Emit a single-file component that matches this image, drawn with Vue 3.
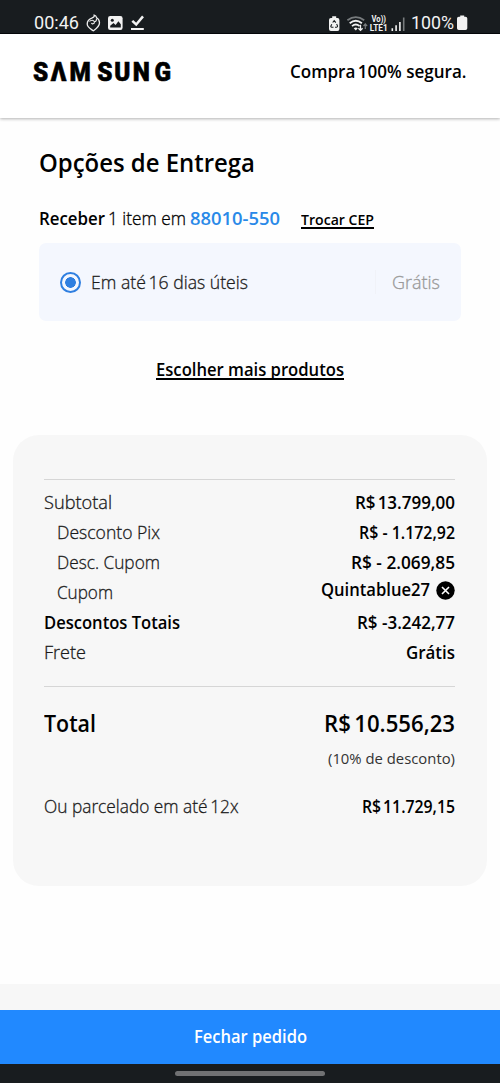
<script setup>
// Condenses a label horizontally so that it fills the given width in pixels.
const vFit = {
  mounted(el, { value }) {
    const natural = el.getBoundingClientRect().width
    el.style.transform = `scaleX(${value / natural})`
    el.style.marginRight = value - natural + 'px'
  },
}

const rows = [
  { label: 'Subtotal', lw: 68, value: 'R$ 13.799,00', vw: 100, tight: true },
  { label: 'Desconto Pix', lw: 103, value: 'R$ - 1.172,92', vw: 96, indent: true },
  { label: 'Desc. Cupom', lw: 103, value: 'R$ - 2.069,85', vw: 104, indent: true },
  { label: 'Cupom', lw: 56, value: 'Quintablue27', vw: 109, indent: true, coupon: true },
  { label: 'Descontos Totais', lw: 136, value: 'R$ -3.242,77', vw: 98, strong: true },
  { label: 'Frete', lw: 42, value: 'Grátis', vw: 49 },
]
</script>

<template>
  <div class="screen">
    <div class="status">
      <span v-fit="45" class="fit clock">00:46</span>
      <svg class="s-left" width="60" height="20" viewBox="0 0 60 20" fill="none">
        <path d="M8.2 3.2C8.6 4.4 7.6 5.2 6.2 5.8C3 7 1.2 9.3 1.2 12C1.2 15.5 5 17 7.3 18.8C10.5 16.5 13.6 14.5 13.5 10.8C13.4 8.4 12.3 6.7 10.6 5.7C10.2 4.2 9.4 3.4 8.2 3.2Z" stroke="#eee" stroke-width="1.3" />
        <path d="M3.5 9.5C5 7.6 8 7.8 8.4 10C8.7 12 5.7 12.6 5.6 10.9M8.4 9.8C9.8 9.7 10.7 8.5 10.4 6.6" stroke="#eee" stroke-width="1.1" />
        <rect x="22" y="4" width="14.6" height="14" rx="2.2" fill="#f2f2f2" />
        <circle cx="26.3" cy="8.2" r="1.5" fill="#181c1f" />
        <path d="M24.2 15.5V13.8L27.5 11L29.6 13L32.4 9.3L34.8 12.2V15.5Z" fill="#181c1f" />
        <path d="M46.3 8.8L50.2 12.5L57 4.4" stroke="#f2f2f2" stroke-width="2.5" />
        <path d="M45 17H57.8" stroke="#f2f2f2" stroke-width="2" />
      </svg>
      <svg class="s-right" width="82" height="20" viewBox="0 0 82 20" fill="none">
        <path d="M3.2 3V1.3H7.2V3H8.5Q10.4 3 10.4 4.9V14.1Q10.4 16 8.5 16H1.9Q0 16 0 14.1V4.9Q0 3 1.9 3Z" fill="#f2f2f2" />
        <path d="M3.7 7.5L5.2 5.6L6.8 7.7M7.6 9L8.5 10.8Q8.7 12 7.4 12.2H6M4.5 12.2H2.8Q1.4 12 2 10.7L2.8 9.2" stroke="#181c1f" stroke-width="1.1" />
        <path d="M18.4 5.3Q26.8-1.2 35.2 5.3" stroke="#777b7d" stroke-width="1.8" />
        <path d="M20.7 8.2Q26.8 3.4 32.9 8.2M23 11.1Q26.8 8 30.6 11.1" stroke="#f2f2f2" stroke-width="1.8" />
        <path d="M24.7 13.2Q26.8 11.8 28.8 13.2L26.8 15.5Z" fill="#f2f2f2" />
        <path d="M31.5 9.8V15.2M29.4 13.3L31.5 15.4L33.6 13.3" stroke="#f2f2f2" stroke-width="1.3" />
        <path d="M36.3 14V9.2M34.5 11L36.3 9L38.1 11" stroke="#777b7d" stroke-width="1.2" />
        <text x="42.5" y="7.4" class="lte" textLength="14.5" lengthAdjust="spacingAndGlyphs">Vo))</text>
        <text x="40.7" y="15.8" class="lte" textLength="18" lengthAdjust="spacingAndGlyphs">LTE1</text>
        <path d="M63.3 16V13.2M67.1 16V10.2M70.9 16V7" stroke="#f2f2f2" stroke-width="1.6" />
        <path d="M74.7 16V2.5" stroke="#777b7d" stroke-width="1.6" />
      </svg>
      <span v-fit="43" class="fit pct">100%</span>
      <svg class="batt" width="11" height="16" viewBox="0 0 11 16">
        <path d="M3.2 1.8V.4H7.2V1.8H8.5Q10.3 1.8 10.3 3.6V13.2Q10.3 15 8.5 15H1.8Q0 15 0 13.2V3.6Q0 1.8 1.8 1.8Z" fill="#f2f2f2" />
      </svg>
    </div>

    <header class="header">
      <svg class="logo" width="148" height="34" viewBox="0 0 148 34" role="img" aria-label="SAMSUNG">
        <text y="20.5" x="1.1 20.1 40 69.7 87.9 107.9 131" transform="scale(0.935 1)">SΛMSUNG</text>
      </svg>
      <span v-fit="176.5" class="fit secure">Compra <span class="near">100%</span> segura.</span>
    </header>

    <main class="main">
      <h1 class="title"><span v-fit="216" class="fit">Opções de Entrega</span></h1>
      <div class="receive">
        <span v-fit="66" class="fit semi">Receber</span>
        <span v-fit="78" class="fit item">1 item em</span>
        <span v-fit="90" class="fit zip">88010-550</span>
        <a class="change"><span v-fit="73" class="fit link">Trocar CEP</span></a>
      </div>
      <div class="option">
        <span class="radio"></span>
        <span v-fit="157" class="fit eta">Em até <span class="near">16</span> dias úteis</span>
        <span class="price"><span v-fit="48" class="fit">Grátis</span></span>
      </div>
      <a class="more"><span v-fit="188" class="fit link">Escolher mais produtos</span></a>
    </main>

    <section class="summary">
      <div class="rows">
        <div v-for="row in rows" :key="row.label" class="row" :class="{ strong: row.strong, indent: row.indent, coupon: row.coupon }">
          <span v-fit="row.lw" class="fit label">{{ row.label }}</span>
          <span class="value">
            <span v-fit="row.vw" class="fit" :class="{ tight: row.tight }">{{ row.value }}</span>
            <svg v-if="row.coupon" class="remove" width="19" height="19" viewBox="0 0 19 19">
              <circle cx="9.5" cy="9.5" r="9.2" fill="#000" />
              <path d="M6 6L13 13M13 6L6 13" stroke="#fff" stroke-width="1.6" />
            </svg>
          </span>
        </div>
      </div>
      <div class="total">
        <span v-fit="52" class="fit">Total</span>
        <span v-fit="131" class="fit tight">R$ 10.556,23</span>
      </div>
      <div class="note"><span v-fit="127" class="fit">(10% de desconto)</span></div>
      <div class="row">
        <span v-fit="194.5" class="fit label">Ou parcelado em até <span class="near">12x</span></span>
        <span class="value"><span v-fit="93" class="fit tight">R$ 11.729,15</span></span>
      </div>
    </section>

    <footer class="footer">
      <button class="checkout"><span v-fit="113" class="fit">Fechar pedido</span></button>
      <div class="nav"><i></i></div>
    </footer>
  </div>
</template>

<style>
body {
  background: #fff;
}
</style>

<style scoped>
.screen {
  width: 500px;
  height: 1083px;
  display: flex;
  flex-direction: column;
  overflow: hidden;
  background: #fefefe;
  color: #000;
  font-family: "Open Sans", "Noto Sans", sans-serif;
  font-size: 18px;
  white-space: nowrap;
}
.fit {
  display: inline-block;
  flex: none;
  transform-origin: 0 50%;
}
.near {
  margin-left: -2px;
}
.tight {
  word-spacing: -2.5px;
}
.link {
  text-decoration: underline;
  text-decoration-thickness: 1.5px;
  text-underline-offset: 2px;
  text-decoration-skip-ink: none;
}
.status {
  height: 34px;
  flex: none;
  box-sizing: border-box;
  padding: 12px 32.5px 0 34px;
  display: flex;
  align-items: flex-start;
  background: #181c1f;
  border-bottom: 1px solid #05070a;
  color: #f2f2f2;
  font-family: Roboto, sans-serif;
  line-height: 22px;
}
.clock {
  font-size: 18.5px;
}
.s-left {
  margin: 0 0 0 7px;
}
.s-right {
  margin: 3px 0 0 auto;
}
.lte {
  font: 700 8.5px Roboto, sans-serif;
  fill: #f2f2f2;
}
.pct {
  font-size: 19px;
}
.batt {
  margin: 3px 0 0 3px;
}
.header {
  height: 84px;
  flex: none;
  box-sizing: border-box;
  display: flex;
  justify-content: space-between;
  padding: 25px 33.5px 0 32px;
  background: #fff;
  box-shadow: 0 1px 3px rgba(0, 0, 0, 0.3);
}
.logo {
  margin-top: 1px;
  overflow: visible;
}
.logo text {
  font: 900 26px Roboto, sans-serif;
  stroke: #000;
  stroke-width: 0.6px;
}
.secure {
  line-height: 24px;
  font-weight: 600;
}
.main {
  padding: 27px 39px 0;
}
.title {
  margin: 0;
  font-size: 25px;
  font-weight: 600;
  line-height: 34px;
}
.receive {
  margin-top: 27px;
  height: 24px;
  line-height: 24px;
  display: flex;
  align-items: baseline;
}
.semi {
  font-weight: 600;
}
.item {
  margin-left: 3px;
  font-weight: 300;
  -webkit-text-stroke: 0.3px currentColor;
}
.zip {
  margin-left: 4px;
  font-weight: 600;
  color: #2989e8;
}
.change {
  margin-left: 21px;
  font-size: 15px;
  font-weight: 600;
}
.option {
  margin-top: 13px;
  height: 78px;
  border-radius: 7px;
  background: #f4f7fe;
  display: flex;
  align-items: center;
  padding: 0 21px 0 20.5px;
  font-weight: 300;
  -webkit-text-stroke: 0.3px currentColor;
}
.radio {
  width: 21px;
  height: 21px;
  box-sizing: border-box;
  border: 2px solid #2f7fe0;
  border-radius: 50%;
  background: radial-gradient(circle, #2f7fe0 5px, transparent 5.6px);
}
.eta {
  margin-left: 10px;
  color: #1c1c1c;
}
.price {
  margin-left: auto;
  padding-left: 16px;
  border-left: 1px solid #f0f2f8;
  color: #999;
}
.more {
  display: block;
  margin-top: 36px;
  text-align: center;
  font-weight: 600;
  line-height: 24px;
}
.summary {
  height: 451px;
  flex: none;
  box-sizing: border-box;
  margin: 54px 13px 0;
  padding: 44px 32px 0 31px;
  border-radius: 26px;
  background: #f7f7f7;
}
.rows {
  height: 208px;
  box-sizing: border-box;
  padding-top: 7px;
  border: solid #d6d6d6;
  border-width: 1px 0;
}
.row {
  height: 30px;
  line-height: 30px;
  display: flex;
  justify-content: space-between;
}
.label {
  font-weight: 300;
  color: #1a1a1a;
  -webkit-text-stroke: 0.3px currentColor;
}
.value {
  font-weight: 600;
}
.indent .label {
  margin-left: 13px;
}
.strong .label {
  font-weight: 600;
  color: #000;
  -webkit-text-stroke: 0;
}
.coupon .value {
  display: flex;
  align-items: center;
  gap: 6px;
  height: 23px;
}
.remove {
  margin-top: 3px;
}
.total {
  margin-top: 18px;
  height: 36px;
  line-height: 36px;
  display: flex;
  justify-content: space-between;
  font-size: 24px;
  font-weight: 600;
}
.note {
  margin-top: 6px;
  height: 22px;
  line-height: 22px;
  font-size: 15px;
  font-weight: 400;
  color: #333;
  text-align: right;
}
.note + .row {
  margin-top: 22px;
}
.footer {
  margin-top: auto;
  padding-top: 26px;
  background: #f7f7f7;
}
.checkout {
  display: block;
  width: 100%;
  height: 54px;
  border: 0;
  padding: 0 0 2px;
  background: #2189ff;
  color: #fff;
  font: inherit;
  font-weight: 600;
}
.nav {
  height: 19px;
  display: flex;
  justify-content: center;
  background: #181c1f;
}
.nav i {
  width: 150px;
  height: 5px;
  margin-top: 7px;
  border-radius: 3px;
  background: #707173;
}
</style>
